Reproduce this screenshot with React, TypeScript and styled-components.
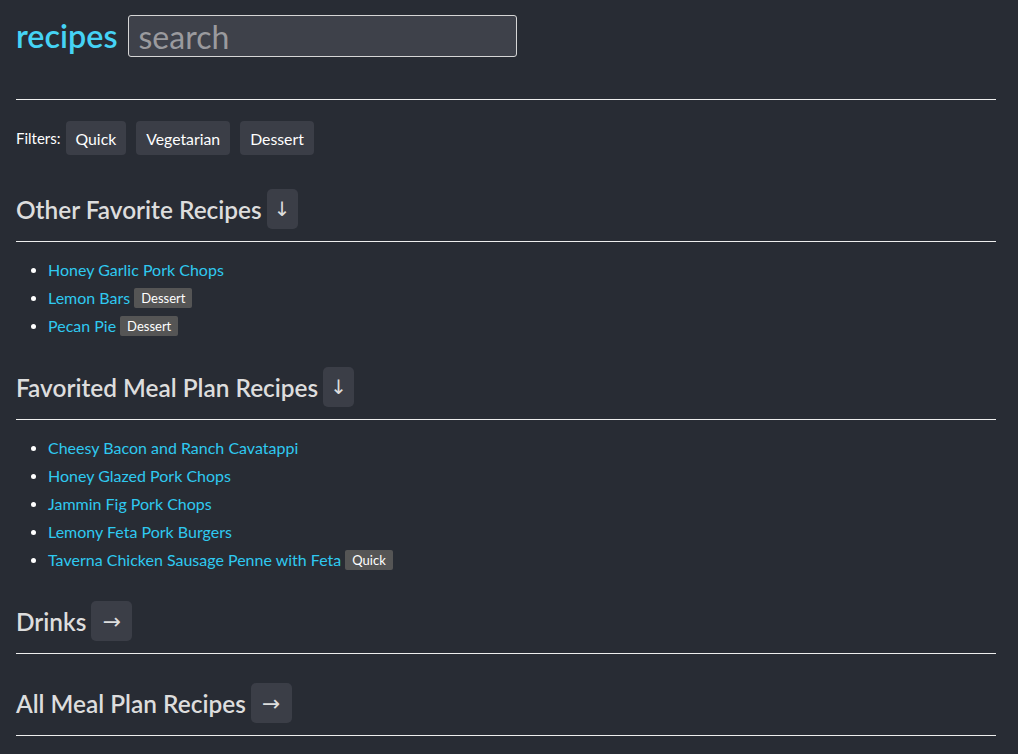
import React from "react";
import styled, { createGlobalStyle } from "styled-components";

const GlobalStyle = createGlobalStyle`
  html, body {
    margin: 0;
    padding: 0;
    background: #282c34;
  }
  body {
    font-family: Lato, "Noto Sans", "DejaVu Sans", sans-serif;
    color: #ffffff;
  }
  * { box-sizing: border-box; }
`;

const Page = styled.div`
  padding: 15px 22px 16px 16px;
  display: flex;
  flex-direction: column;
  min-height: 754px;
`;

const Header = styled.header`
  display: flex;
  align-items: center;
  gap: 11px;
  height: 42px;
`;

const Title = styled.h1`
  margin: 0;
  font-size: 32.3px;
  font-weight: 600;
  color: #45d3f5;
  line-height: 1;
`;

const Search = styled.input`
  width: 389px;
  height: 42px;
  background: #3e414a;
  border: 1px solid #d6d6d6;
  border-radius: 3px;
  color: #fff;
  font-family: inherit;
  font-size: 32px;
  padding: 0 9px;
  outline: none;
  &::placeholder {
    color: #9a9a9e;
  }
`;

const Rule = styled.hr<{ $top: number }>`
  margin: ${(p) => p.$top}px 0 0 0;
  border: none;
  height: 1px;
  background: #eeeeee;
`;

const Filters = styled.div`
  margin-top: 21px;
  display: flex;
  align-items: center;
  gap: 10px;
  font-size: 15px;
`;

const FilterLabel = styled.span`
  margin-right: -5px;
`;

const FilterButton = styled.button`
  height: 34px;
  padding: 0 10px;
  border: none;
  border-radius: 4px;
  background: #3b3e47;
  color: #fff;
  font-family: inherit;
  font-size: 15.8px;
  cursor: pointer;
`;

const Section = styled.section<{ $gap: number }>`
  margin-top: ${(p) => p.$gap}px;
`;

const HeadingRow = styled.div`
  display: flex;
  align-items: center;
  gap: 5px;
  height: 40px;
`;

const Heading = styled.h2`
  margin: 0;
  font-size: 24.4px;
  font-weight: 600;
  color: #dddddd;
`;

const Toggle = styled.button<{ $wide?: boolean }>`
  height: 40px;
  width: ${(p) => (p.$wide ? 41 : 31)}px;
  border: none;
  border-radius: 5px;
  background: #3b3e47;
  color: #dddddd;
  font-family: "DejaVu Sans", sans-serif;
  font-size: ${(p) => (p.$wide ? 22 : 20)}px;
  padding: 0;
  display: flex;
  align-items: center;
  justify-content: center;
`;

const List = styled.ul`
  margin: 14px 0 0 0;
  padding: 0 0 0 32px;
  list-style: none;
`;

const Item = styled.li`
  line-height: 28px;
  font-size: 16px;
  &::before {
    content: "";
    display: inline-block;
    width: 5px;
    height: 5px;
    border-radius: 50%;
    background: #ffffff;
    margin-left: -17px;
    margin-right: 12px;
    vertical-align: 3px;
  }
`;

const RecipeLink = styled.a`
  color: #2fc9f0;
  text-decoration: none;
`;

const Tag = styled.span`
  display: inline-block;
  margin-left: 4px;
  padding: 0 7px;
  height: 20px;
  line-height: 20px;
  font-size: 13px;
  background: #555555;
  color: #fff;
  border-radius: 2px;
  vertical-align: 1px;
`;

type Recipe = { name: string; tag?: string };
type SectionData = { title: string; open: boolean; recipes: Recipe[] };

const sections: SectionData[] = [
  {
    title: "Other Favorite Recipes",
    open: true,
    recipes: [
      { name: "Honey Garlic Pork Chops" },
      { name: "Lemon Bars", tag: "Dessert" },
      { name: "Pecan Pie", tag: "Dessert" },
    ],
  },
  {
    title: "Favorited Meal Plan Recipes",
    open: true,
    recipes: [
      { name: "Cheesy Bacon and Ranch Cavatappi" },
      { name: "Honey Glazed Pork Chops" },
      { name: "Jammin Fig Pork Chops" },
      { name: "Lemony Feta Pork Burgers" },
      { name: "Taverna Chicken Sausage Penne with Feta", tag: "Quick" },
    ],
  },
  { title: "Drinks", open: false, recipes: [] },
  { title: "All Meal Plan Recipes", open: false, recipes: [] },
];

export default function App() {
  return (
    <>
      <GlobalStyle />
      <Page>
        <Header>
          <Title>recipes</Title>
          <Search placeholder="search" />
        </Header>
        <Rule $top={42} />
        <Filters>
          <FilterLabel>Filters:</FilterLabel>
          <FilterButton>Quick</FilterButton>
          <FilterButton>Vegetarian</FilterButton>
          <FilterButton>Dessert</FilterButton>
        </Filters>
        {sections.map((s, i) => {
          const prev = sections[i - 1];
          const gap = i === 0 ? 34 : prev.open ? 27 : 29;
          return (
            <Section key={s.title} $gap={gap}>
              <HeadingRow>
                <Heading>{s.title}</Heading>
                <Toggle $wide={!s.open}>{s.open ? "↓" : "→"}</Toggle>
              </HeadingRow>
              <Rule $top={12} />
              {s.open && (
                <List>
                  {s.recipes.map((r) => (
                    <Item key={r.name}>
                      <RecipeLink href="#">{r.name}</RecipeLink>
                      {r.tag && <Tag>{r.tag}</Tag>}
                    </Item>
                  ))}
                </List>
              )}
            </Section>
          );
        })}
      </Page>
    </>
  );
}
